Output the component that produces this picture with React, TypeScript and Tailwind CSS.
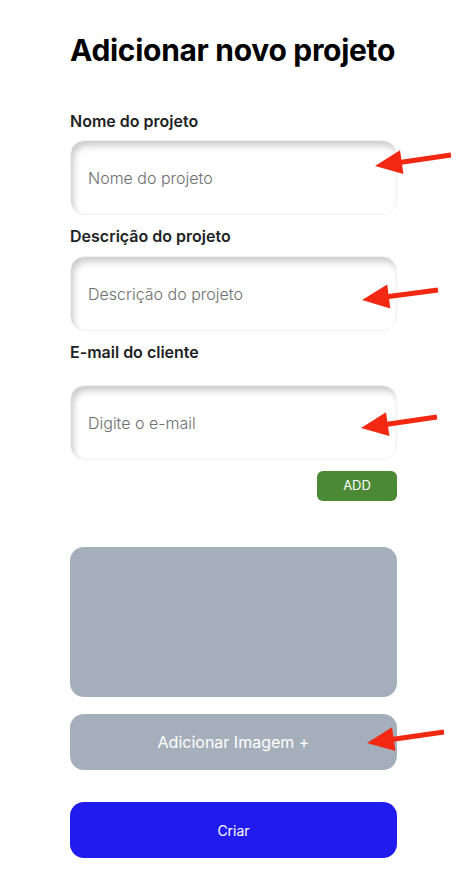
import React from "react";

const FONT = { fontFamily: "Inter, 'Noto Sans', sans-serif" };

function Field({ label, placeholder, labelClass }: { label: string; placeholder: string; labelClass: string }) {
  return (
    <div className="flex flex-col">
      <label className={`text-[16px] font-semibold leading-6 text-[#1d1f24] ${labelClass}`}>{label}</label>
      <input
        placeholder={placeholder}
        className="h-[75px] w-full rounded-[14px] border border-[#f1f1f1] bg-white px-[17px] text-[16px] font-light text-[#333] placeholder:text-[#6e6e6e] shadow-[inset_3px_5px_6px_rgba(0,0,0,0.2)] outline-none"
      />
    </div>
  );
}

function Arrow({ x1, y1, x2, y2 }: { x1: number; y1: number; x2: number; y2: number }) {
  const dx = x2 - x1;
  const dy = y2 - y1;
  const len = Math.hypot(dx, dy);
  const ux = dx / len;
  const uy = dy / len;
  const bx = x2 - ux * 27;
  const by = y2 - uy * 27;
  const px = -uy * 12;
  const py = ux * 12;
  return (
    <g fill="#f32813" stroke="#f32813">
      <line x1={x1} y1={y1} x2={bx + ux * 4} y2={by + uy * 4} strokeWidth="5" />
      <polygon points={`${x2},${y2} ${bx + px},${by + py} ${bx - px},${by - py}`} stroke="none" />
    </g>
  );
}

export default function App() {
  return (
    <div className="relative h-[885px] w-[469px] bg-white" style={FONT}>
      <div className="ml-[70px] flex w-[327px] flex-col pt-[32px]">
        <h1 className="text-[30px] font-bold leading-9 tracking-[-0.01em] text-black">Adicionar novo projeto</h1>

        <div className="mt-[41px] flex flex-col">
          <Field label="Nome do projeto" placeholder="Nome do projeto" labelClass="mb-[7px]" />
          <div className="mt-[9px]">
            <Field label="Descrição do projeto" placeholder="Descrição do projeto" labelClass="mb-[8px]" />
          </div>
          <div className="mt-[9px]">
            <Field label="E-mail do cliente" placeholder="Digite o e-mail" labelClass="mb-[21px]" />
          </div>
        </div>

        <div className="mt-[11px] flex justify-end">
          <button className="h-[30px] w-[80px] rounded-[6px] bg-[#4b8935] text-[13px] text-white">ADD</button>
        </div>

        <div className="mt-[46px] h-[150px] rounded-[14px] bg-[#a5afbc]" />

        <button className="mt-[17px] h-[56px] rounded-[14px] bg-[#a5afbc] text-[16px] text-white">
          Adicionar Imagem +
        </button>

        <button className="mt-[32px] h-[56px] rounded-[14px] bg-[#211bf0] text-[14px] text-white">Criar</button>
      </div>

      <svg className="pointer-events-none absolute left-0 top-0" width="469" height="885">
        <Arrow x1={451} y1={155} x2={375} y2={166} />
        <Arrow x1={438} y1={290} x2={362} y2={300} />
        <Arrow x1={437} y1={417} x2={361} y2={428} />
        <Arrow x1={444} y1={732} x2={367} y2={743} />
      </svg>
    </div>
  );
}
